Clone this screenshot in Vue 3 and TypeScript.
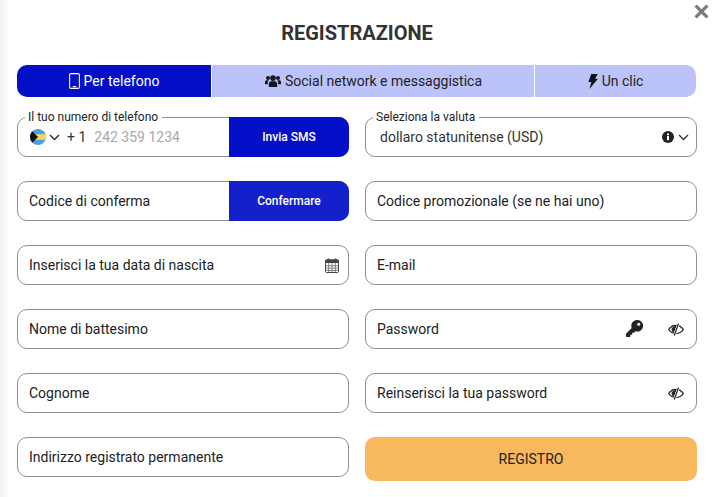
<script setup lang="ts">
const plain = ['Nome di battesimo', 'Cognome', 'Indirizzo registrato permanente']
</script>

<template>
  <div class="page">
    <div class="shade"></div>
    <svg class="close" viewBox="0 0 14 14" width="15" height="15"><path d="M1.500 1.500 12.500 12.500M12.500 1.500 1.500 12.500" stroke="#7b7b7b" stroke-width="3" fill="none"/></svg>
    <h1 class="title">REGISTRAZIONE</h1>

    <div class="tabs">
      <div class="tab active tab-a">
        <svg width="11" height="16" viewBox="0 0 11 16" fill="none" stroke="#fff" stroke-width="1.100"><rect x=".6" y=".6" width="9.800" height="14.800" rx="1.400"/><path d="M3.800 13.600h3.400"/></svg>
        <span>Per telefono</span>
      </div>
      <div class="tab tab-b">
        <svg class="people" width="16" height="14" viewBox="0 0 16 13" fill="#15151f"><circle cx="8" cy="3.600" r="2.800"/><circle cx="3" cy="3.400" r="2"/><circle cx="13" cy="3.400" r="2"/><path d="M3.800 12.600V9.400C3.800 7.600 5 6.800 6 6.800h4c1 0 2.200.8 2.200 2.600v3.200z"/><path d="M0 9.800V7.600C0 6.400.8 5.800 1.600 5.800h2.200C3 6.700 2.800 7.500 2.800 8.600v1.200zM16 9.800V7.600C16 6.400 15.200 5.800 14.400 5.800h-2.200c.8.900 1 1.700 1 2.800v1.200z"/></svg>
        <span>Social network e messaggistica</span>
      </div>
      <div class="tab tab-c">
        <svg width="10" height="15" viewBox="0 0 10 15" fill="#111"><path d="M3.200 0 9.800 0 7 4.800 10 4.800 1.400 15 3.400 8 .4 8z"/></svg>
        <span>Un clic</span>
      </div>
    </div>

    <div class="form">
      <div class="field legend-field phone">
        <span class="legend">Il tuo numero di telefono</span>
        <svg class="flag" width="16" height="16" viewBox="0 0 16 16">
          <defs><clipPath id="flag-clip"><circle cx="8" cy="8" r="8"/></clipPath></defs>
          <g clip-path="url(#flag-clip)">
            <rect width="16" height="16" fill="#4d9fe0"/>
            <rect y="5.200" width="16" height="5.600" fill="#f3d768"/>
            <path d="M0 0 8 8 0 16z" fill="#111"/>
          </g>
        </svg>
        <svg class="chev" width="11" height="7" viewBox="0 0 11 7" fill="none" stroke="#333" stroke-width="1.500"><path d="M1 1 5.500 5.500 10 1"/></svg>
        <span class="prefix">+ 1</span>
        <span class="placeholder">242 359 1234</span>
        <button class="action sms" type="button">Invia SMS</button>
      </div>

      <div class="field legend-field currency">
        <span class="legend">Seleziona la valuta</span>
        <span class="value">dollaro statunitense (USD)</span>
        <svg class="info" width="12" height="12" viewBox="0 0 12 12"><circle cx="6" cy="6" r="6" fill="#222"/><rect x="5" y="5" width="2" height="4.200" fill="#fff"/><rect x="5" y="2.500" width="2" height="1.700" fill="#fff"/></svg>
        <svg class="chev-r" width="11" height="7" viewBox="0 0 11 7" fill="none" stroke="#333" stroke-width="1.300"><path d="M1 1 5.500 5.500 10 1"/></svg>
      </div>

      <div class="field with-action">
        <span class="label">Codice di conferma</span>
        <button class="action confirm" type="button">Confermare</button>
      </div>
      <div class="field"><span class="label">Codice promozionale (se ne hai uno)</span></div>

      <div class="field">
        <span class="label">Inserisci la tua data di nascita</span>
        <svg class="end" width="14" height="15" viewBox="0 0 14 15" fill="none">
          <rect x=".5" y="1.800" width="13" height="12.700" rx="1" fill="#fff" stroke="#444"/>
          <rect x=".5" y="1.800" width="13" height="3.200" fill="#444"/>
          <path d="M3.500 .5v2.500M10.500 .5v2.500" stroke="#444" stroke-width="1.600"/>
          <path d="M.5 7.800h13M.5 10.200h13M.5 12.500h13M3.700 5v9M7 5v9M10.300 5v9" stroke="#666" stroke-width=".8"/>
        </svg>
      </div>
      <div class="field"><span class="label">E-mail</span></div>

      <div class="field"><span class="label">{{ plain[0] }}</span></div>
      <div class="field">
        <span class="label">Password</span>
        <svg class="key" width="17" height="17" viewBox="0 0 17 17" fill="#222"><path d="M11.200 0a5.800 5.800 0 1 1-1.700 11.300L8 12.800H6.200v1.900H4.300V17H.6L0 16.400v-2.600L5.700 8A5.800 5.800 0 0 1 11.200 0z"/><circle cx="12.700" cy="4.300" r="1.500" fill="#fff"/></svg>
        <svg class="eye" width="16" height="13" viewBox="0 0 16 13" fill="none">
          <path d="M.7 6.500C2.500 3.800 5 2.400 8 2.400s5.500 1.400 7.300 4.100C13.500 9.200 11 10.600 8 10.600S2.500 9.200.7 6.500z" stroke="#222" stroke-width="1.300"/>
          <path d="M3.600 6.500C3.600 4.500 6 2.800 8.600 2.800L6.200 10C4.600 9.400 3.600 8 3.600 6.500z" fill="#222"/>
          <path d="M10.500.5 6.300 12.500" stroke="#fff" stroke-width="2.400"/>
          <path d="M10.500.5 6.300 12.500" stroke="#222" stroke-width="1.200"/>
        </svg>
      </div>

      <div class="field"><span class="label">{{ plain[1] }}</span></div>
      <div class="field">
        <span class="label">Reinserisci la tua password</span>
        <svg class="eye" width="16" height="13" viewBox="0 0 16 13" fill="none">
          <path d="M.7 6.500C2.500 3.800 5 2.400 8 2.400s5.500 1.400 7.300 4.100C13.500 9.200 11 10.600 8 10.600S2.500 9.200.7 6.500z" stroke="#222" stroke-width="1.300"/>
          <path d="M3.600 6.500C3.600 4.500 6 2.800 8.600 2.800L6.200 10C4.600 9.400 3.600 8 3.600 6.500z" fill="#222"/>
          <path d="M10.500.5 6.300 12.500" stroke="#fff" stroke-width="2.400"/>
          <path d="M10.500.5 6.300 12.500" stroke="#222" stroke-width="1.200"/>
        </svg>
      </div>

      <div class="field"><span class="label">{{ plain[2] }}</span></div>
      <button class="register" type="button">REGISTRO</button>
    </div>
  </div>
</template>

<style scoped>
.page {
  position: relative;
  width: 715px;
  height: 497px;
  box-sizing: border-box;
  padding: 0 18px 0 17px;
  background: #fff;
  overflow: hidden;
  font-family: Roboto, "Liberation Sans", sans-serif;
  color: #222;
}
.shade {
  position: absolute;
  left: 0;
  top: 0;
  bottom: 0;
  width: 10px;
  background: linear-gradient(to right, #f0f0f0, #fff);
}
.close {
  position: absolute;
  left: 694px;
  top: 4px;
}
.title {
  margin: 0;
  padding: 23px 0 21px;
  height: 21px;
  line-height: 21px;
  font-size: 20px;
  font-weight: 700;
  text-align: center;
  color: #333;
}
.tabs {
  display: flex;
  height: 32px;
  margin-right: 1px;
  gap: 1px;
  border-radius: 10px;
  overflow: hidden;
}
.tab {
  display: flex;
  align-items: center;
  justify-content: center;
  gap: 4px;
  background: #bcc3fa;
  font-size: 14px;
  color: #222;
}
.tab-a { width: 194px; }
.tab-b { width: 322px; }
.tab-c { flex: 1; }
.people { margin-left: 1px; }
.tab.active {
  background: #0310c8;
  color: #fff;
}
.form {
  display: grid;
  grid-template-columns: 332px 332px;
  column-gap: 16px;
  row-gap: 24px;
  margin-top: 20px;
  grid-auto-rows: 40px;
}
.field {
  position: relative;
  display: flex;
  align-items: center;
  box-sizing: border-box;
  height: 40px;
  padding: 0 12px 0 11px;
  border: 1px solid #8f8f8f;
  border-radius: 10px;
  background: #fff;
  font-size: 14px;
  color: #222;
}
.label { flex: 1; white-space: nowrap; }
.legend {
  position: absolute;
  left: 7px;
  top: -7px;
  padding: 0 4px 0 3px;
  background: #fff;
  font-size: 12px;
  line-height: 13px;
  color: #222;
}
.phone { padding-right: 0; }
.flag { margin-left: 1px; flex: none; }
.chev { margin-left: 3px; flex: none; }
.prefix {
  margin-left: 7px;
  font-size: 14px;
  color: #333;
}
.placeholder {
  margin-left: 8px;
  flex: 1;
  font-size: 14px;
  color: #a8a8a8;
}
.action {
  position: absolute;
  right: -1px;
  top: -1px;
  bottom: -1px;
  width: 120px;
  border: 0;
  border-radius: 0 10px 10px 0;
  color: #fff;
  font: 500 12px Roboto, "Liberation Sans", sans-serif;
}
.sms { background: #0310c8; }
.confirm { background: #1520cd; }
.value {
  flex: 1;
  margin-left: 3px;
  font-size: 14px;
  color: #333;
}
.info { flex: none; margin-right: 4px; }
.chev-r { flex: none; margin-right: -5px; }
.end { flex: none; margin-right: -3px; }
.key { flex: none; margin-right: 25px; margin-bottom: 1px; }
.eye { flex: none; }
.register {
  height: 44px;
  border: 0;
  border-radius: 10px;
  background: #f8b85e;
  color: #222;
  padding-bottom: 2px;
  font: 400 14px Roboto, "Liberation Sans", sans-serif;
}
</style>
